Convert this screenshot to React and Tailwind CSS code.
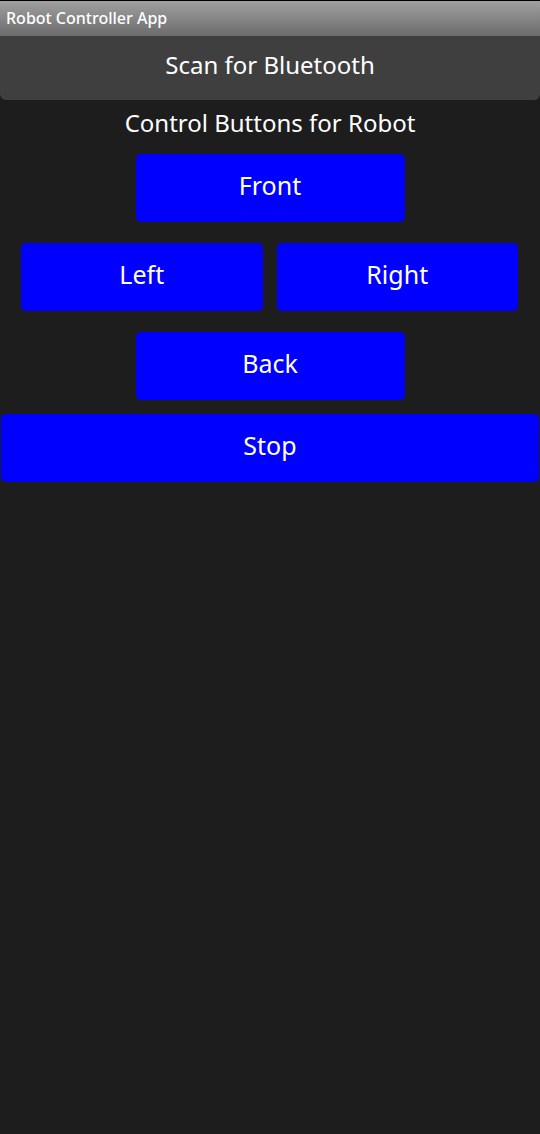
import React from "react";

const font = { fontFamily: '"Noto Sans", "Open Sans", sans-serif' };

function Btn({ label, className = "" }) {
  return (
    <button className={`h-[68px] rounded-[5px] bg-[#0000ff] pb-[5px] text-[25px] text-white ${className}`}>
      {label}
    </button>
  );
}

export default function App() {
  return (
    <div className="min-h-[1134px] w-[540px] bg-[#1d1d1d]" style={font}>
      {/* Title bar */}
      <div className="flex h-[36px] items-center border-t border-black bg-gradient-to-b from-[#a0a0a0] to-[#6c6c6c] px-[6px] pb-[2px]">
        <span className="text-[16px] font-medium text-white">Robot Controller App</span>
      </div>

      {/* Scan */}
      <button className="flex h-[64px] w-full items-center justify-center rounded-b-[6px] bg-[#3f3f3f] pb-[6px] text-[24px] text-white">
        Scan for Bluetooth
      </button>

      <div className="flex flex-col items-center">
        <h1 className="mt-[4px] text-[24px] leading-[38px] text-white">Control Buttons for Robot</h1>

        <Btn label="Front" className="mt-[12px] w-[269px]" />

        <div className="mt-[21px] flex w-full gap-[14px] pl-[21px] pr-[22px]">
          <Btn label="Left" className="flex-1" />
          <Btn label="Right" className="flex-1" />
        </div>

        <Btn label="Back" className="mt-[21px] w-[269px]" />

        <div className="mt-[14px] w-full px-[1px]">
          <Btn label="Stop" className="w-full" />
        </div>
      </div>
    </div>
  );
}
